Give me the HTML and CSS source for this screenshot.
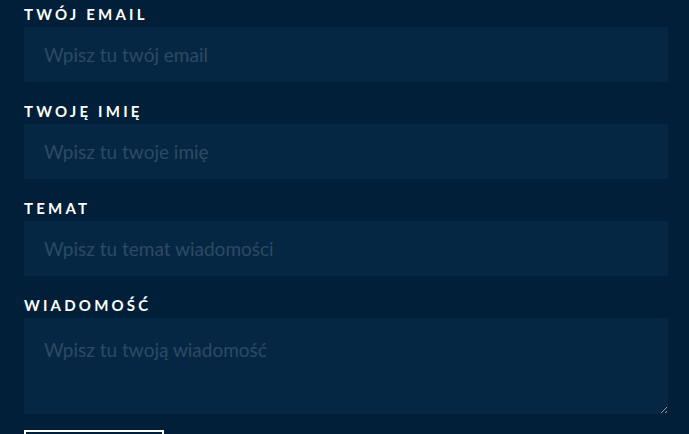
FILE: index.html
```html
<!DOCTYPE html>
<html lang="pl">
<head>
<meta charset="utf-8">
<link rel="stylesheet" href="styles.css">
</head>
<body>
<form class="contact">
  <label class="field-label" for="email">Twój email</label>
  <input class="field" id="email" type="text" placeholder="Wpisz tu twój email">
  <label class="field-label" for="name">Twoję imię</label>
  <input class="field" id="name" type="text" placeholder="Wpisz tu twoje imię">
  <label class="field-label" for="subject">Temat</label>
  <input class="field" id="subject" type="text" placeholder="Wpisz tu temat wiadomości">
  <label class="field-label" for="msg">Wiadomość</label>
  <textarea class="field area" id="msg" placeholder="Wpisz tu twoją wiadomość"></textarea>
  <button class="send" type="submit">Wyślij</button>
</form>
</body>
</html>
```
FILE: styles.css
```css
html, body {
  margin: 0;
  padding: 0;
  background: #011f38;
  height: 100%;
  overflow: hidden;
}
.contact {
  display: flex;
  flex-direction: column;
  width: 644px;
  padding: 4px 0 0 24px;
  font-family: Lato, "Noto Sans", sans-serif;
}
.field-label {
  display: block;
  color: #ffffff;
  font-weight: 700;
  font-size: 15px;
  line-height: 20px;
  letter-spacing: 3.2px;
  text-transform: uppercase;
  margin-bottom: 3px;
}
.field {
  box-sizing: border-box;
  width: 644px;
  height: 55px;
  border: none;
  outline: none;
  background: #052743;
  color: #c9d4de;
  font-family: Lato, "Noto Sans", sans-serif;
  font-size: 19px;
  padding: 0 20px;
  margin: 0 0 19px 0;
}
.field::placeholder {
  color: #2d4a64;
}
.area {
  height: 96px;
  padding: 20px 20px;
  resize: vertical;
  margin-bottom: 16px;
}
.send {
  box-sizing: border-box;
  width: 140px;
  height: 60px;
  padding-top: 14px;
  background: transparent;
  border: 2px solid #ffffff;
  color: #ffffff;
  font-family: Lato, "Noto Sans", sans-serif;
  font-weight: 700;
  font-size: 14px;
  letter-spacing: 3px;
  text-transform: uppercase;
}
```
